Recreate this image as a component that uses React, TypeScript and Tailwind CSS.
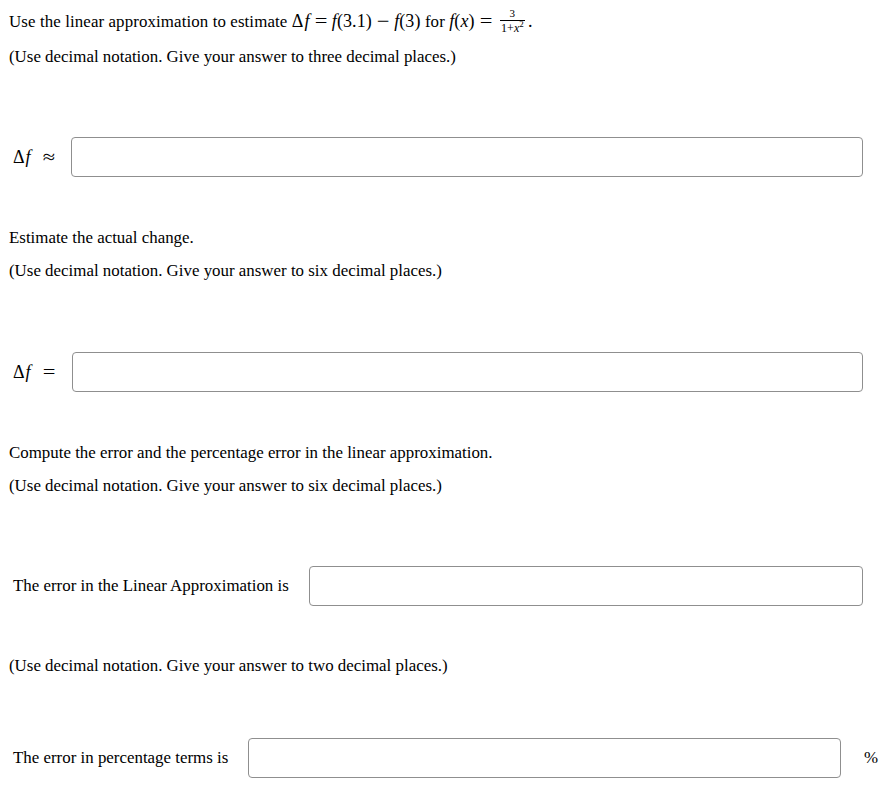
import React from "react"

function Op({ children }: { children: React.ReactNode }) {
  return <span className="mx-[6px] inline-block scale-x-125">{children}</span>
}

function Fx() {
  return (
    <span className="inline-flex flex-col items-center align-middle mx-[3px] leading-none -translate-y-[2px]">
      <span className="text-[11px] px-[1px] w-full text-center border-b border-black pb-[1px]">3</span>
      <span className="text-[12px] pt-[1px] px-[1px]">
        1+<i>x</i>
        <sup className="text-[9px]">2</sup>
      </span>
    </span>
  )
}

function Answer({ label }: { label: React.ReactNode }) {
  return (
    <div className="flex items-center pl-[13px] pr-[28px] gap-[18px]">
      <span className="whitespace-nowrap">{label}</span>
      <input
        type="text"
        className="flex-1 h-10 border border-[#8f8f8f] rounded-[4px] bg-white outline-none"
      />
    </div>
  )
}

export default function App() {
  return (
    <div className="w-[891px] min-h-[788px] bg-white text-black font-['Liberation_Serif',serif] text-[16.9px] leading-6 px-[9px]">
      <p className="pt-[9px] h-[33px] whitespace-nowrap tracking-[0.1px]">
        Use the linear approximation to estimate{" "}
        <span className="text-[18px]">
          Δ<i className="ml-[1px]">f</i>
          <Op>=</Op>
          <i>f</i>(3.1)<Op>−</Op>
          <i>f</i>(3)
        </span>{" "}
        for{" "}
        <span className="text-[18px]">
          <i>f</i>(<i>x</i>)<Op>=</Op>
          <Fx />.
        </span>
      </p>
      <p className="mt-[12px]">(Use decimal notation. Give your answer to three decimal places.)</p>

      <div className="mt-[68px] -mx-[9px]">
        <Answer
          label={
            <span className="text-[18px]">
              Δ<i className="ml-[1px]">f</i>
              <span className="ml-[13px] inline-block scale-x-125">≈</span>
            </span>
          }
        />
      </div>

      <p className="mt-[49px]">Estimate the actual change.</p>
      <p className="mt-[9px]">(Use decimal notation. Give your answer to six decimal places.)</p>

      <div className="mt-[69px] -mx-[9px]">
        <Answer
          label={
            <span className="text-[18px]">
              Δ<i className="ml-[1px]">f</i>
              <span className="ml-[13px] inline-block scale-x-125">=</span>
            </span>
          }
        />
      </div>

      <p className="mt-[49px]">Compute the error and the percentage error in the linear approximation.</p>
      <p className="mt-[9px]">(Use decimal notation. Give your answer to six decimal places.)</p>

      <div className="mt-[68px] -mx-[9px]">
        <div className="flex items-center pl-[13px] pr-[28px] gap-[20px]">
          <span className="whitespace-nowrap">The error in the Linear Approximation is</span>
          <input
            type="text"
            className="flex-1 h-10 border border-[#8f8f8f] rounded-[4px] bg-white outline-none"
          />
        </div>
      </div>

      <p className="mt-[48px]">(Use decimal notation. Give your answer to two decimal places.)</p>

      <div className="mt-[60px] -mx-[9px]">
        <div className="flex items-center pl-[13px] pr-[13px]">
          <span className="whitespace-nowrap">The error in percentage terms is</span>
          <input
            type="text"
            className="flex-1 ml-[20px] h-10 border border-[#8f8f8f] rounded-[4px] bg-white outline-none"
          />
          <span className="ml-[23px]">%</span>
        </div>
      </div>
    </div>
  )
}
